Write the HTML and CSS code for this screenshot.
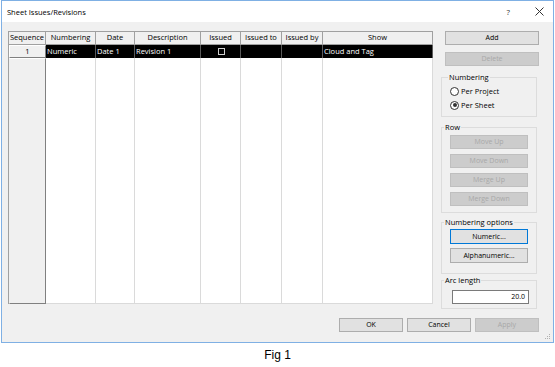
FILE: index.html
```html
<!DOCTYPE html>
<html lang="en">

<head>
  <meta charset="UTF-8">
  <meta name="viewport" content="width=device-width, initial-scale=1.0">
  <title>Sheet Issues/Revisions</title>
  <link rel="stylesheet" href="styles.css">
</head>

<body>
  <div class="dialog">
    <!-- 标题栏 -->
    <div class="titlebar">
      <span class="title">Sheet Issues/Revisions</span>
      <span class="help">?</span>
      <svg class="close" width="9" height="9" viewBox="0 0 9 9">
        <path d="M0.5 0.5 L8.5 8.5 M8.5 0.5 L0.5 8.5" stroke="#333" stroke-width="1" fill="none" />
      </svg>
    </div>

    <div class="content">
      <div class="main">
        <!-- 表格 -->
        <div class="grid">
          <div class="th">Sequence</div>
          <div class="th">Numbering</div>
          <div class="th">Date</div>
          <div class="th">Description</div>
          <div class="th">Issued</div>
          <div class="th">Issued to</div>
          <div class="th">Issued by</div>
          <div class="th">Show</div>

          <div class="rh">1</div>
          <div class="td">Numeric</div>
          <div class="td">Date 1</div>
          <div class="td">Revision 1</div>
          <div class="td check"><span class="box"></span></div>
          <div class="td"></div>
          <div class="td"></div>
          <div class="td">Cloud and Tag</div>

          <div class="rh-empty"></div>
          <div class="empty"></div>
          <div class="empty"></div>
          <div class="empty"></div>
          <div class="empty"></div>
          <div class="empty"></div>
          <div class="empty"></div>
          <div class="empty"></div>
        </div>

        <!-- 右侧面板 -->
        <div class="panel">
          <button class="btn wide">Add</button>
          <button class="btn wide delete" disabled>Delete</button>

          <fieldset class="group numbering">
            <legend>Numbering</legend>
            <label class="radio"><span class="dot"></span>Per Project</label>
            <label class="radio"><span class="dot checked"></span>Per Sheet</label>
          </fieldset>

          <fieldset class="group row">
            <legend>Row</legend>
            <button class="btn inner" disabled>Move Up</button>
            <button class="btn inner" disabled>Move Down</button>
            <button class="btn inner" disabled>Merge Up</button>
            <button class="btn inner" disabled>Merge Down</button>
          </fieldset>

          <fieldset class="group options">
            <legend>Numbering options</legend>
            <button class="btn inner tall focus">Numeric...</button>
            <button class="btn inner tall">Alphanumeric...</button>
          </fieldset>

          <fieldset class="group arc">
            <legend>Arc length</legend>
            <div class="input">20.0</div>
          </fieldset>
        </div>
      </div>

      <!-- 底部按钮 -->
      <div class="footer">
        <button class="btn foot">OK</button>
        <button class="btn foot">Cancel</button>
        <button class="btn foot" disabled>Apply</button>
      </div>
    </div>

    <svg class="grip" width="6" height="6" viewBox="0 0 6 6">
      <rect x="4" y="0" width="1" height="1" fill="#b0b0b0" />
      <rect x="2" y="2" width="1" height="1" fill="#b0b0b0" />
      <rect x="4" y="2" width="1" height="1" fill="#b0b0b0" />
      <rect x="0" y="4" width="1" height="1" fill="#b0b0b0" />
      <rect x="2" y="4" width="1" height="1" fill="#b0b0b0" />
      <rect x="4" y="4" width="1" height="1" fill="#b0b0b0" />
    </svg>
  </div>

  <p class="caption">Fig 1</p>
</body>

</html>
```

FILE: styles.css
```css
* {
  margin: 0;
  padding: 0;
  box-sizing: border-box;
}

body {
  background-color: #fff;
  font-family: "Open Sans", "Noto Sans", sans-serif;
  font-size: 7.5px;
  color: #000;
  width: 555px;
}

.dialog {
  width: 553px;
  height: 343px;
  margin-left: 1px;
  border: 1px solid #7fb0e4;
  background-color: #f0f0f0;
  position: relative;
}

/* 标题栏 */
.titlebar {
  height: 21px;
  background-color: #fff;
  display: flex;
  align-items: center;
  padding-left: 5px;
}

.title {
  flex: 1;
  font-size: 7.5px;
}

.help {
  font-size: 8px;
  color: #333;
  margin-right: 25px;
}

.close {
  margin-right: 9px;
}

.content {
  padding: 9px 12px 10px 6px;
}

.main {
  display: flex;
  height: 276px;
}

/* 表格 */
.grid {
  width: 425px;
  height: 273px;
  display: grid;
  grid-template-columns: 37px 50px 39px 66px 40px 41px 41px 1fr;
  grid-template-rows: 13px 13px 1fr;
  background-color: #fff;
  border-top: 1px solid #a0a0a0;
  border-left: 1px solid #a0a0a0;
}

.th {
  background-color: #f0f0f0;
  border-right: 1px solid #a0a0a0;
  border-bottom: 1px solid #a0a0a0;
  text-align: center;
  line-height: 11px;
  white-space: nowrap;
  overflow: hidden;
}

.rh {
  background-color: #f0f0f0;
  border: 1px solid;
  border-color: #fff #808080 #808080 #fff;
  text-align: center;
  line-height: 11px;
}

.td {
  background-color: #000;
  color: #fff;
  border-right: 1px solid #5a5a5a;
  line-height: 13px;
  padding-left: 1px;
  white-space: nowrap;
}

.check {
  display: flex;
  justify-content: center;
  align-items: center;
}

.check .box {
  width: 7px;
  height: 7px;
  border: 1px solid #d0d0d0;
}

.rh-empty {
  background-color: #f0f0f0;
  border: 1px solid;
  border-color: #fff #808080 #808080 #f0f0f0;
}

.empty {
  border-right: 1px solid #dadada;
  border-bottom: 1px solid #dadada;
}

/* 右侧面板 */
.panel {
  width: 98px;
  margin-left: 8px;
  display: flex;
  flex-direction: column;
}

.btn {
  font-family: inherit;
  font-size: 7px;
  color: #000;
  background-color: #e1e1e1;
  border: 1px solid #adadad;
  height: 14px;
  line-height: 12px;
  display: block;
}

.btn:disabled {
  background-color: #cccccc;
  border-color: #bfbfbf;
  color: #a8a8a8;
}

.wide {
  width: 94px;
  margin-left: 4px;
}

.delete {
  margin-top: 7px;
}

.group {
  width: 96px;
  border: 1px solid #dcdcdc;
  padding: 2px 4px 4px;
}

.group legend {
  font-size: 7.5px;
  line-height: 10px;
  padding: 0 1px;
  margin-left: 2px;
}

.numbering {
  margin-top: 6px;
}

.radio {
  display: flex;
  align-items: center;
  height: 14px;
  padding-left: 4px;
}

.dot {
  width: 9px;
  height: 9px;
  border: 1px solid #333;
  border-radius: 50%;
  background-color: #fff;
  margin-right: 2px;
  position: relative;
}

.dot.checked::after {
  content: "";
  position: absolute;
  left: 1.5px;
  top: 1.5px;
  width: 4px;
  height: 4px;
  border-radius: 50%;
  background-color: #333;
}

.row {
  margin-top: 5px;
  padding: 3px 0 6px;
  display: flex;
  flex-direction: column;
  align-items: center;
  gap: 5px;
}

.inner {
  width: 78px;
}

.options {
  margin-top: 4px;
  padding: 2px 0 10px;
  display: flex;
  flex-direction: column;
  align-items: center;
  gap: 4px;
}

.tall {
  height: 15px;
  line-height: 13px;
}

.focus {
  border-color: #0078d7;
}

.arc {
  margin-top: 1px;
  padding: 5px 0 4px;
}

.input {
  width: 77px;
  height: 14px;
  margin-left: 10px;
  background-color: #fff;
  border: 1px solid #7a7a7a;
  text-align: right;
  line-height: 12px;
  padding-right: 3px;
  font-size: 7px;
}

/* 底部按钮 */
.footer {
  margin-top: 11px;
  display: flex;
  justify-content: flex-end;
  gap: 4px;
  padding-right: 2px;
}

.foot {
  width: 64px;
}

.grip {
  position: absolute;
  right: 2px;
  bottom: 2px;
}

.caption {
  font-family: "Liberation Sans", Arial, sans-serif;
  font-size: 12px;
  text-align: center;
  margin-top: 5px;
  line-height: 14px;
}
```
